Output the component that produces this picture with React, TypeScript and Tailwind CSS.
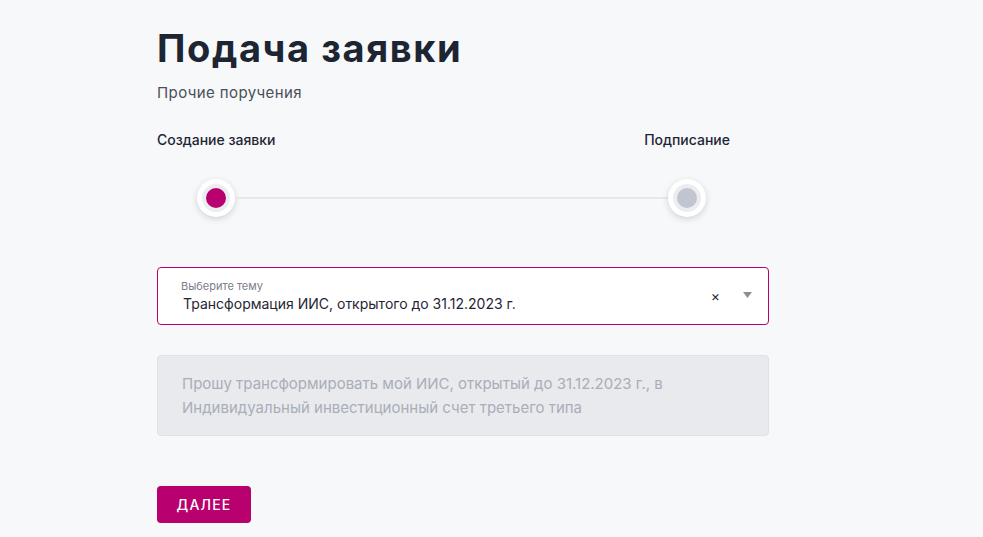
export default function App() {
  return (
    <div className="min-h-[537px] w-full bg-[#f7f8fa] font-['Inter','Noto_Sans',sans-serif] text-[#1e2633]">
      <div className="ml-[157px] w-[612px] pt-[22px]">
        <h1 className="text-[38px] font-bold leading-[52px] tracking-[1.6px] text-[#1d2532]">
          Подача заявки
        </h1>
        <p className="mt-[9px] text-[15px] leading-[20px] tracking-[0.4px] text-[#4a4f57]">
          Прочие поручения
        </p>

        {/* stepper */}
        <div className="mt-[28px] w-[573px]">
          <div className="flex justify-between text-[14px] font-medium leading-[18px] text-[#1e2633]">
            <span>Создание заявки</span>
            <span>Подписание</span>
          </div>
        </div>
        <div className="mt-[30px] flex w-[549px] items-center pl-[40px]">
          <div className="flex h-[38px] w-[38px] shrink-0 items-center justify-center rounded-full bg-white shadow-[0_2px_6px_rgba(30,40,60,0.18)]">
            <div className="h-[28px] w-[28px] rounded-full border-[4px] border-[#ecedf1] bg-[#b8006e]" />
          </div>
          <div className="h-[2px] flex-1 bg-[#e6e8ee]" />
          <div className="flex h-[38px] w-[38px] shrink-0 items-center justify-center rounded-full bg-white shadow-[0_2px_6px_rgba(30,40,60,0.18)]">
            <div className="h-[28px] w-[28px] rounded-full border-[4px] border-[#ecedf1] bg-[#c0c5cf]" />
          </div>
        </div>

        {/* select */}
        <div className="mt-[50px] flex h-[58px] items-center rounded-[4px] border border-[#b8006e] bg-white pl-[23px] pr-[16px]">
          <div className="flex-1">
            <div className="text-[11px] leading-[14px] text-[#7b808a]">Выберите тему</div>
            <div className="mt-[1px] pl-[2px] text-[14px] leading-[20px] text-[#1e2633]">
              Трансформация ИИС, открытого до 31.12.2023 г.
            </div>
          </div>
          <span className="mr-[23px] text-[14px] leading-none text-[#1e2633]">×</span>
          <svg width="9" height="6" viewBox="0 0 9 6" className="mb-[2px]">
            <path d="M0 0h9L4.5 6z" fill="#8a8f98" />
          </svg>
        </div>

        {/* text */}
        <div className="mt-[30px] h-[81px] rounded-[4px] border border-[#dfe2e7] bg-[#e8eaee] px-[24px] pt-[16px] text-[15px] leading-[24px] text-[#a9aeb8]">
          Прошу трансформировать мой ИИС, открытый до 31.12.2023 г., в Индивидуальный инвестиционный счет третьего типа
        </div>

        <button className="mt-[50px] h-[37px] w-[94px] rounded-[4px] bg-[#b8006e] text-[14px] font-medium tracking-[1.2px] text-white">
          ДАЛЕЕ
        </button>
      </div>
    </div>
  )
}
